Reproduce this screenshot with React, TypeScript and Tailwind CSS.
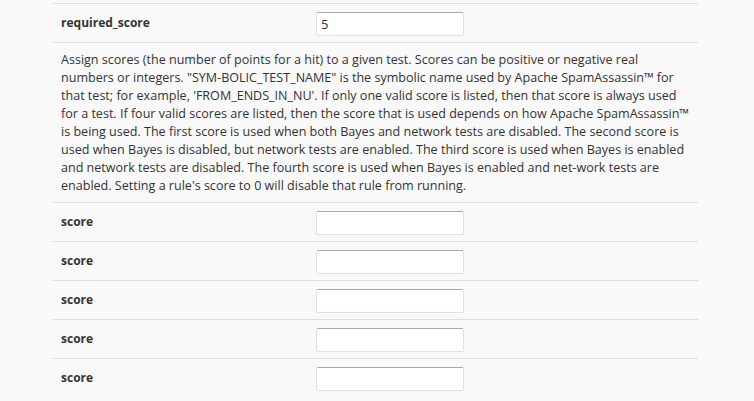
import React from 'react';

const description =
  'Assign scores (the number of points for a hit) to a given test. Scores can be positive or negative real numbers or integers. "SYM-BOLIC_TEST_NAME" is the symbolic name used by Apache SpamAssassin™ for that test; for example, \'FROM_ENDS_IN_NU\'. If only one valid score is listed, then that score is always used for a test. If four valid scores are listed, then the score that is used depends on how Apache SpamAssassin™ is being used. The first score is used when both Bayes and network tests are disabled. The second score is used when Bayes is disabled, but network tests are enabled. The third score is used when Bayes is enabled and network tests are disabled. The fourth score is used when Bayes is enabled and net-work tests are enabled. Setting a rule\'s score to 0 will disable that rule from running.';

function Field({ label, value }: { label: string; value?: string }) {
  return (
    <div className="flex h-[39px] items-center border-t border-[#dddddd]">
      <div className="w-[255px] pl-2 text-[12px] font-bold text-[#333]">{label}</div>
      <div className="pl-2">
        <input
          type="text"
          defaultValue={value}
          className="h-[24px] w-[148px] rounded-[2px] border border-[#dde1ea] border-t-[#a9a9a9] bg-white px-1 text-[13px] text-[#333] outline-none"
        />
      </div>
    </div>
  );
}

export default function App() {
  return (
    <div
      className="min-h-screen bg-[#f9f9f9] pt-[3px]"
      style={{ fontFamily: '"Open Sans", "Liberation Sans", sans-serif' }}
    >
      <div className="ml-[53px] w-[645px]">
        <Field label="required_score" value="5" />
        <div className="border-t border-[#dddddd] px-2 pt-[8px] pb-[7px] text-[12.55px] leading-[18px] text-[#333]">
          {description}
        </div>
        {[0, 1, 2, 3, 4].map((i) => (
          <Field key={i} label="score" />
        ))}
      </div>
    </div>
  );
}
